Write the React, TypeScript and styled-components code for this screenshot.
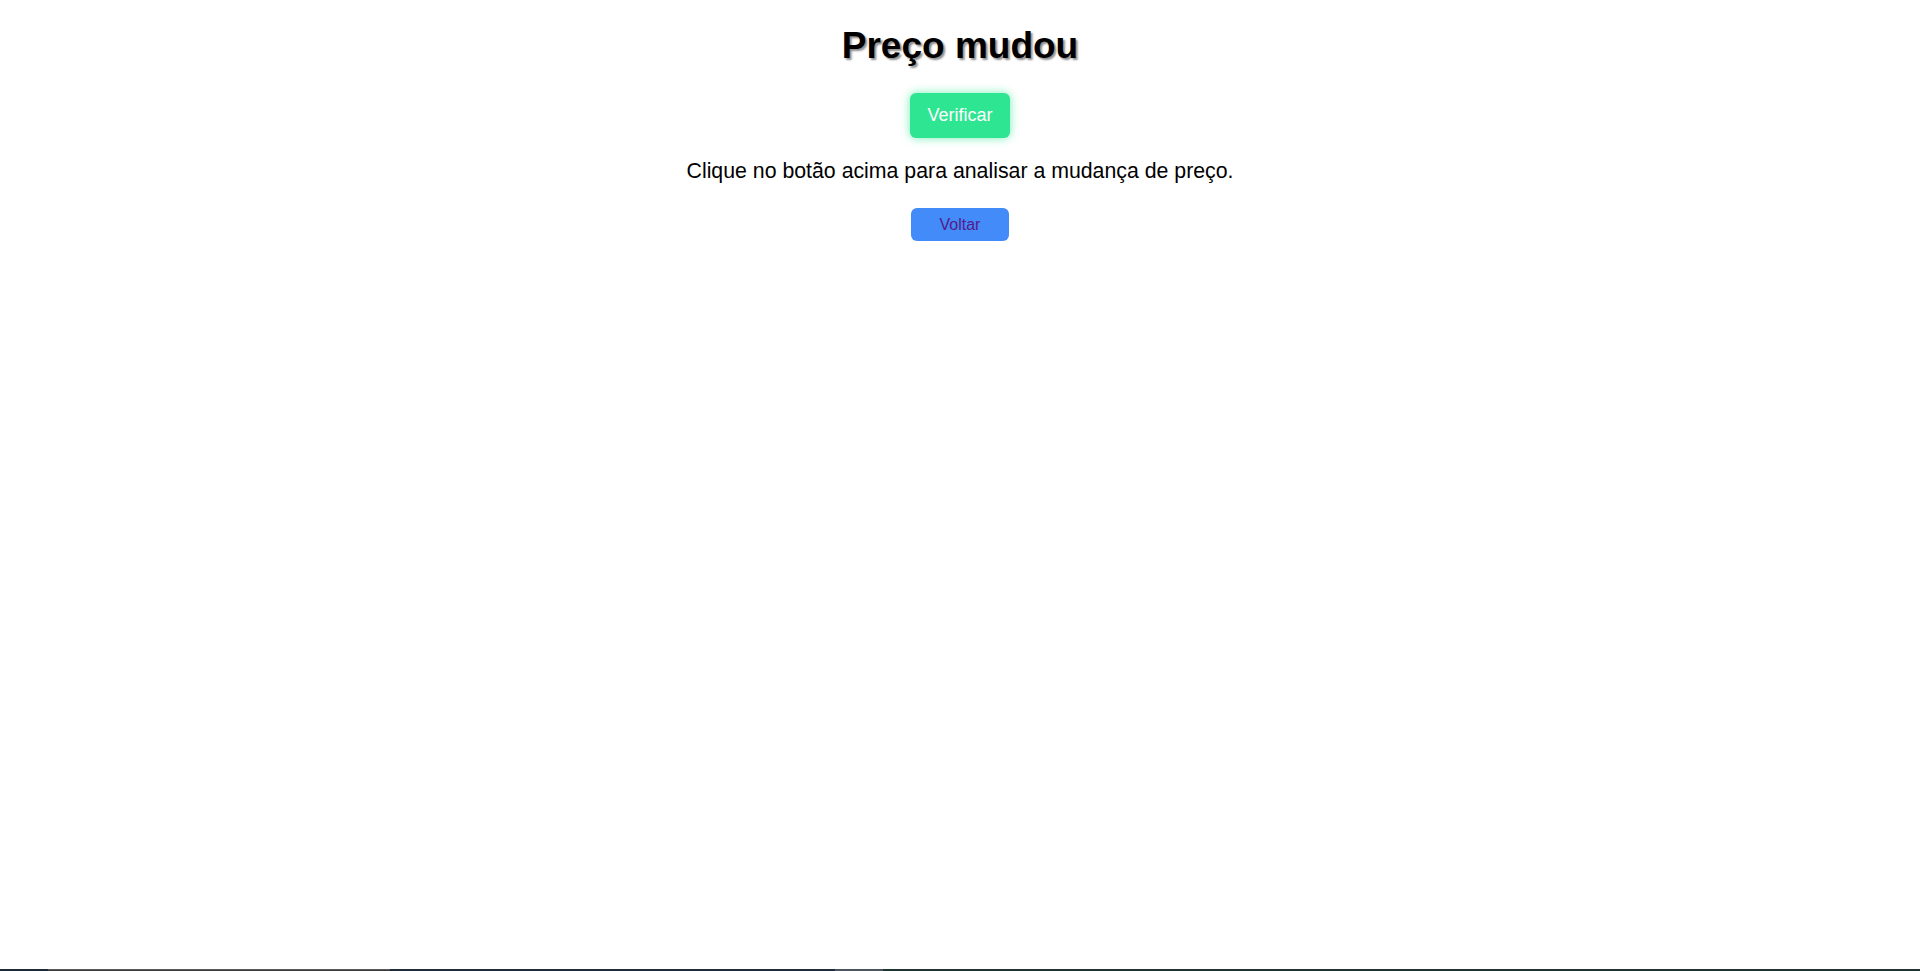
import React from "react";
import styled, { createGlobalStyle } from "styled-components";

const GlobalStyle = createGlobalStyle`
  html, body {
    margin: 0;
    padding: 0;
    background: #ffffff;
    font-family: "Liberation Sans", Arial, sans-serif;
  }
`;

const Page = styled.div`
  min-height: 100vh;
  display: flex;
  flex-direction: column;
`;

const Main = styled.main`
  flex: 1;
  display: flex;
  flex-direction: column;
  align-items: center;
`;

const Title = styled.h1`
  margin: 25px 0 0;
  font-size: 37px;
  font-weight: 700;
  line-height: normal;
  color: #000000;
  text-shadow: 2px 2px 2px rgba(0, 0, 0, 0.45);
`;

const VerifyButton = styled.button`
  margin-top: 26px;
  padding: 12px 17px;
  border: none;
  border-radius: 6px;
  background: #2ee592;
  color: #ffffff;
  font-family: "Liberation Sans", Arial, sans-serif;
  font-size: 18px;
  line-height: 21px;
  box-shadow: 0 0 10px rgba(46, 229, 146, 0.65);
  cursor: pointer;
`;

const Message = styled.p`
  margin: 21px 0 0;
  font-size: 21.3px;
  line-height: normal;
  color: #000000;
`;

const BackButton = styled.button`
  margin-top: 24px;
  width: 98px;
  height: 33px;
  padding: 0;
  border: none;
  border-radius: 6px;
  background: #428bf9;
  cursor: pointer;
  display: flex;
  align-items: center;
  justify-content: center;
`;

const BackLink = styled.a`
  color: #551a8b;
  font-family: "Liberation Sans", Arial, sans-serif;
  font-size: 16px;
  text-decoration: none;
`;

const Taskbar = styled.div`
  height: 2px;
  display: flex;
`;

const TaskSegment = styled.div<{ $w: string; $bg: string; $top?: string }>`
  flex: ${(p) => p.$w};
  background: ${(p) => p.$bg};
  border-top: ${(p) => (p.$top ? `1px solid ${p.$top}` : "none")};
  box-sizing: border-box;
`;

export default function App() {
  return (
    <Page>
      <GlobalStyle />
      <Main>
        <Title>Preço mudou</Title>
        <VerifyButton>Verificar</VerifyButton>
        <Message>Clique no botão acima para analisar a mudança de preço.</Message>
        <BackButton>
          <BackLink href="#">Voltar</BackLink>
        </BackButton>
      </Main>
      <Taskbar>
        <TaskSegment $w="0 0 48px" $bg="#1d2a38" />
        <TaskSegment $w="0 0 342px" $bg="#3b3b3b" $top="#5a5a5a" />
        <TaskSegment $w="0 0 445px" $bg="#1e2c3d" />
        <TaskSegment $w="0 0 48px" $bg="#4a5560" />
        <TaskSegment $w="1" $bg="#1e3433" />
      </Taskbar>
    </Page>
  );
}
